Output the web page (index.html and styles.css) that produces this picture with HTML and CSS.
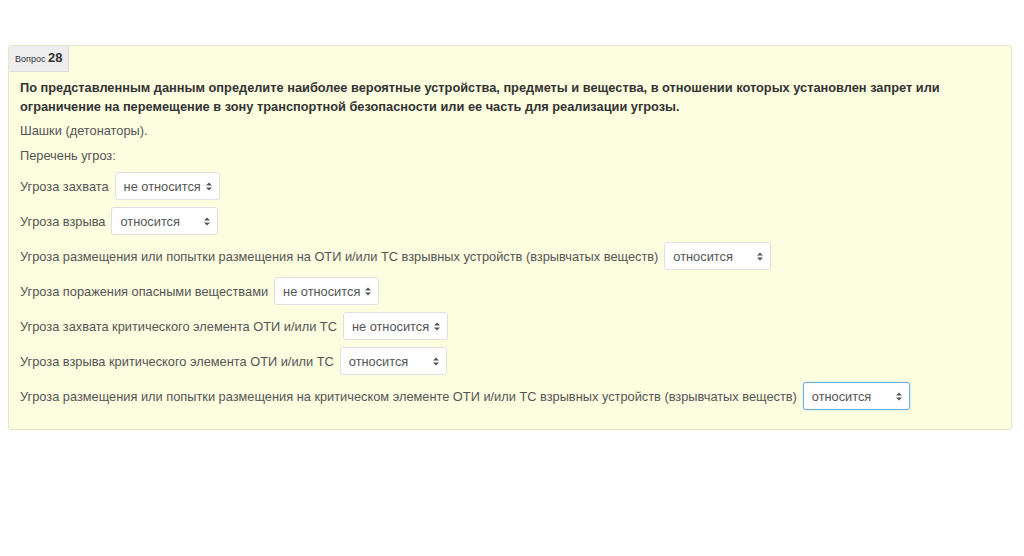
FILE: index.html
```html
<!DOCTYPE html>
<html lang="ru">
<head>
  <meta charset="UTF-8">
  <meta name="viewport" content="width=device-width, initial-scale=1.0">
  <title>Вопрос 28</title>
  <link rel="stylesheet" href="styles.css">
</head>
<body>
  <div class="que">
    <div class="info">Вопрос <span class="qno">28</span></div>
    <div class="content">
      <p class="qtext">По представленным данным определите наиболее вероятные устройства, предметы и вещества, в отношении которых установлен запрет или ограничение на перемещение в зону транспортной безопасности или ее часть для реализации угрозы.</p>
      <p class="line">Шашки (детонаторы).</p>
      <p class="line list-title">Перечень угроз:</p>

      <div class="row">
        <span>Угроза захвата</span>
        <span class="sel">
          <select class="w-auto"><option>не относится</option><option>относится</option></select>
          <svg class="arrows" width="6" height="9" viewBox="0 0 6 9"><path d="M0 3.5L3 0.5L6 3.5Z M0 5.5L3 8.5L6 5.5Z" fill="#555"/></svg>
        </span>
      </div>
      <div class="row">
        <span>Угроза взрыва</span>
        <span class="sel">
          <select><option>относится</option><option>не относится</option></select>
          <svg class="arrows" width="6" height="9" viewBox="0 0 6 9"><path d="M0 3.5L3 0.5L6 3.5Z M0 5.5L3 8.5L6 5.5Z" fill="#555"/></svg>
        </span>
      </div>
      <div class="row">
        <span>Угроза размещения или попытки размещения на ОТИ и/или ТС взрывных устройств (взрывчатых веществ)</span>
        <span class="sel">
          <select><option>относится</option><option>не относится</option></select>
          <svg class="arrows" width="6" height="9" viewBox="0 0 6 9"><path d="M0 3.5L3 0.5L6 3.5Z M0 5.5L3 8.5L6 5.5Z" fill="#555"/></svg>
        </span>
      </div>
      <div class="row">
        <span>Угроза поражения опасными веществами</span>
        <span class="sel">
          <select class="w-auto"><option>не относится</option><option>относится</option></select>
          <svg class="arrows" width="6" height="9" viewBox="0 0 6 9"><path d="M0 3.5L3 0.5L6 3.5Z M0 5.5L3 8.5L6 5.5Z" fill="#555"/></svg>
        </span>
      </div>
      <div class="row">
        <span>Угроза захвата критического элемента ОТИ и/или ТС</span>
        <span class="sel">
          <select class="w-auto"><option>не относится</option><option>относится</option></select>
          <svg class="arrows" width="6" height="9" viewBox="0 0 6 9"><path d="M0 3.5L3 0.5L6 3.5Z M0 5.5L3 8.5L6 5.5Z" fill="#555"/></svg>
        </span>
      </div>
      <div class="row">
        <span>Угроза взрыва критического элемента ОТИ и/или ТС</span>
        <span class="sel">
          <select><option>относится</option><option>не относится</option></select>
          <svg class="arrows" width="6" height="9" viewBox="0 0 6 9"><path d="M0 3.5L3 0.5L6 3.5Z M0 5.5L3 8.5L6 5.5Z" fill="#555"/></svg>
        </span>
      </div>
      <div class="row">
        <span>Угроза размещения или попытки размещения на критическом элементе ОТИ и/или ТС взрывных устройств (взрывчатых веществ)</span>
        <span class="sel">
          <select class="focused"><option>относится</option><option>не относится</option></select>
          <svg class="arrows" width="6" height="9" viewBox="0 0 6 9"><path d="M0 3.5L3 0.5L6 3.5Z M0 5.5L3 8.5L6 5.5Z" fill="#555"/></svg>
        </span>
      </div>
    </div>
  </div>
</body>
</html>
```

FILE: styles.css
```css
body {
  margin: 0;
  padding: 45px 12px 0 8px;
  font-family: "Liberation Sans", Arial, sans-serif;
  font-size: 12.8px;
  color: #555;
  background: #fff;
}
.que {
  background: #fdfddf;
  border: 1px solid #e6e6c8;
  border-radius: 3px;
  padding-bottom: 19px;
}
.info {
  display: inline-block;
  background: #eeeeee;
  border-right: 1px solid #dcdcdc;
  border-bottom: 1px solid #dcdcdc;
  padding: 3px 6px 3px 6px;
  font-size: 9px;
  color: #333;
  line-height: 17px;
}
.qno {
  font-size: 13px;
  font-weight: bold;
}
.content {
  padding: 6px 11px 0 11px;
}
p {
  margin: 0;
  line-height: 19px;
}
.qtext {
  font-weight: bold;
  color: #333;
  margin-bottom: 5px;
}
.line {
  margin-bottom: 6px;
}
.list-title {
  margin-bottom: 7px;
}
.row {
  display: flex;
  align-items: center;
  gap: 6px;
  height: 28px;
  margin-bottom: 7px;
}
.row:last-child {
  margin-bottom: 0;
}
.sel {
  position: relative;
  display: inline-block;
}
select {
  appearance: none;
  -webkit-appearance: none;
  font-family: inherit;
  font-size: 12.8px;
  color: #555;
  background: #fff;
  border: 1px solid #e0e0e0;
  border-radius: 3px;
  height: 28px;
  width: 107px;
  padding: 0 17px 0 8px;
  outline: none;
}
select.w-auto {
  width: auto;
}
select.focused {
  border-color: #66afe9;
  box-shadow: 0 0 2px rgba(102,175,233,0.5);
}
.arrows {
  position: absolute;
  right: 8px;
  top: 10px;
  pointer-events: none;
}
```
